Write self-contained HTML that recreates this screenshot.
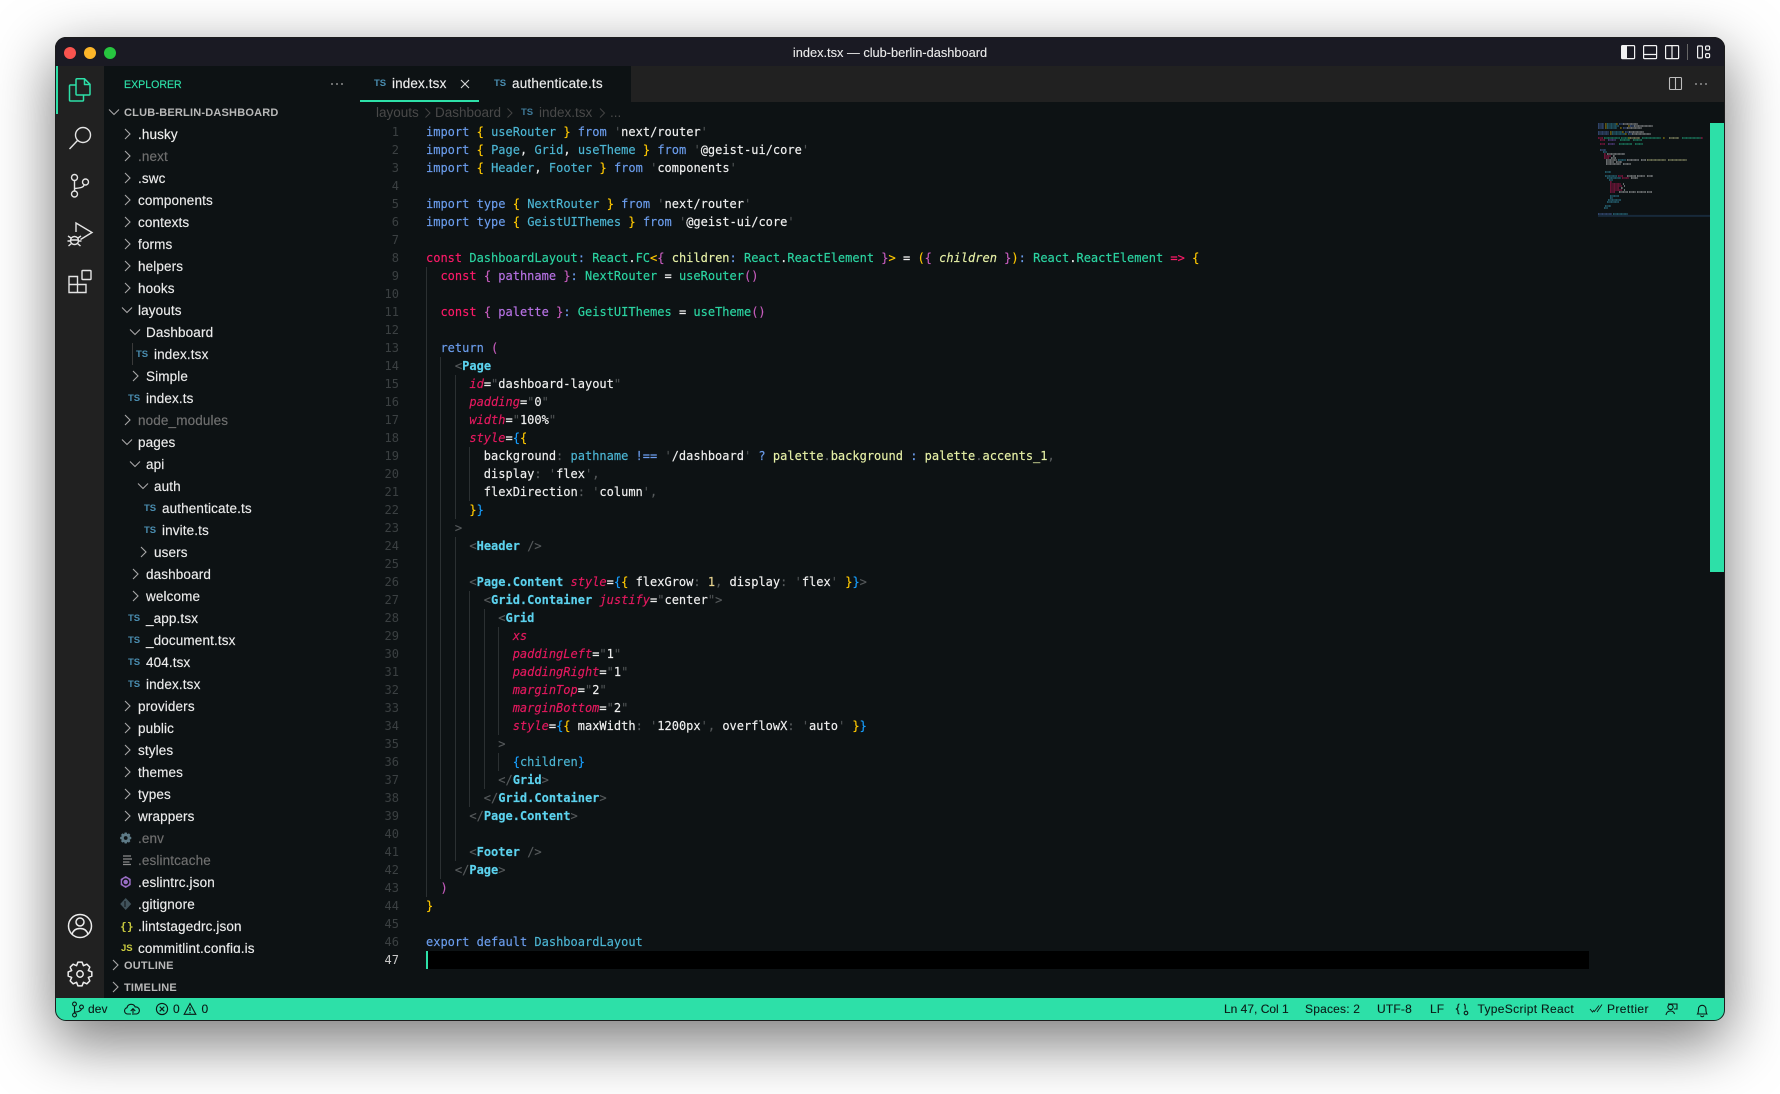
<!DOCTYPE html>
<html><head><meta charset="utf-8"><title>index.tsx — club-berlin-dashboard</title>
<style>
html,body{margin:0;padding:0;background:#fff;width:1780px;height:1094px;overflow:hidden}
.win{position:absolute;left:55px;top:37px;width:1670px;height:984px;border-radius:11px;overflow:hidden;box-shadow:0 20px 60px 2px rgba(0,0,0,.52)}
.in{position:absolute;left:-55px;top:-37px;width:1780px;height:1094px;background:#0d1214;font-family:"Liberation Sans",sans-serif}
.bd{position:absolute;left:0;top:0;right:0;bottom:0;border:1px solid #1c1c1c;border-radius:11px;pointer-events:none}
.a{position:absolute;white-space:pre}
.r{position:absolute;height:22px;line-height:22px;font-size:13.5px;letter-spacing:.13px;color:#ececec;white-space:pre;margin-top:1px;-webkit-text-stroke:.15px}
.dim{color:#707070}
.ts{position:absolute;font-size:9.5px;font-weight:bold;color:#4a8db0;line-height:22px;height:22px;white-space:pre;margin-top:1px}
.h{position:absolute;font-size:11px;font-weight:bold;letter-spacing:.2px;color:#b8b8b8;white-space:pre;line-height:16px;margin-top:1px}
.st{position:absolute;top:998px;height:22px;line-height:22px;font-size:12px;letter-spacing:.1px;color:#0b1a16;white-space:pre;-webkit-text-stroke:.1px}
.bc{position:absolute;top:104px;height:18px;line-height:18px;font-size:13.5px;color:#494949;white-space:pre}
pre{margin:0;font-family:"DejaVu Sans Mono","Liberation Mono",monospace;font-size:12px;line-height:18px}
#code{position:absolute;left:426px;top:123px;color:#f0f0f0;-webkit-text-stroke:.15px}
#nums{position:absolute;left:360px;top:123px;width:39px;text-align:right;color:#3b4042}
.gl{position:absolute;width:1px;background:#2b3032}
.k{color:#6b9ded}.c{color:#fb1a68}.i{color:#4cb6d4}.t{color:#2bd5a2}.s{color:#f2f2f2}.q{color:#4c5052}
.y{color:#ffc800}.p{color:#c65cbd}.b{color:#179fff}.v{color:#b772e4}.e{color:#e6f0a6}.ei{color:#e6f0a6;font-style:italic}
.g{color:#5cd2ee;font-weight:bold}.at{color:#e5195f;font-style:italic}.d{color:#565a5c}.n{color:#e9d591}
svg{position:absolute;left:0;top:0;overflow:visible}
</style></head><body>
<div class="win"><div class="in">

<!-- backgrounds -->
<div class="a" style="left:55px;top:37px;width:1670px;height:29px;background:#1a1a23"></div>
<div class="a" style="left:56px;top:66px;width:48px;height:932px;background:#212121"></div>
<div class="a" style="left:631px;top:66px;width:1094px;height:36px;background:#212121"></div>
<div class="a" style="left:426px;top:951px;width:1163px;height:18px;background:#000"></div>
<div class="a" style="left:1710px;top:123px;width:15px;height:449px;background:#2de0a8"></div>
<div class="a" style="left:55px;top:998px;width:1670px;height:23px;background:#2de0a8"></div>
<div class="a" style="left:56px;top:66px;width:2px;height:48px;background:#2de0a8"></div>
<div class="a" style="left:360px;top:100px;width:119px;height:2px;background:#2de0a8"></div>
<div class="a" style="left:426px;top:951px;width:2px;height:18px;background:#2de0a8"></div>

<!-- title -->
<div class="a" style="left:782px;top:43.500px;width:216px;text-align:center;line-height:17px;font-size:12.8px;color:#ececec;-webkit-text-stroke:.1px">index.tsx — club-berlin-dashboard</div>

<svg width="1780" height="1094" fill="none">
 <!-- traffic lights -->
 <circle cx="70" cy="53" r="6" fill="#f9544f"/><circle cx="90" cy="53" r="6" fill="#fdb629"/><circle cx="110" cy="53" r="6" fill="#27c53f"/>
 <!-- titlebar layout icons -->
 <g stroke="#f2f2f2" stroke-width="1.2">
  <rect x="1621.6" y="45.6" width="13" height="13" rx="1"/><rect x="1622" y="46" width="5" height="12" fill="#f2f2f2" stroke="none"/>
  <rect x="1643.6" y="45.6" width="13" height="13" rx="1"/><path d="M1644 54.5h12"/>
  <rect x="1665.6" y="45.6" width="13" height="13" rx="1"/><path d="M1672 46v12"/>
  <rect x="1697.6" y="46" width="4.8" height="12" rx="1"/><rect x="1705.6" y="46" width="4" height="4" rx="1.2"/><rect x="1705.6" y="53.6" width="4" height="4" rx="1.2"/>
 </g>
 <path d="M1687.5 44v16" stroke="#666" stroke-width="1"/>
 <!-- split editor + dots -->
 <g stroke="#bdbdbd" stroke-width="1.1"><rect x="1669.5" y="77.5" width="12" height="12" rx="1"/><path d="M1675.5 78v11"/></g>
 <g fill="#b0b0b0"><circle cx="1696" cy="84" r=".9"/><circle cx="1701" cy="84" r=".9"/><circle cx="1706" cy="84" r=".9"/>
 <circle cx="332" cy="84" r=".9"/><circle cx="337" cy="84" r=".9"/><circle cx="342" cy="84" r=".9"/></g>

 <!-- activity bar -->
 <g stroke="#2de0a8" stroke-width="1.5" stroke-linejoin="round">
  <path d="M77 78.8h7.5l5.5 5.5v9.7a1 1 0 0 1-1 1h-12a1 1 0 0 1-1-1v-14.200a1 1 0 0 1 1-1z"/><path d="M84.500 79v5.500h5.500"/>
  <path d="M76 85h-5.500a1 1 0 0 0-1 1v14a1 1 0 0 0 1 1h12a1 1 0 0 0 1-1v-5"/>
 </g>
 <g stroke="#e4e4e4" stroke-width="1.4">
  <circle cx="83" cy="135" r="7.500"/><path d="M77.500 140.500L69.500 149"/>
  <circle cx="74.500" cy="177.500" r="3"/><circle cx="74.500" cy="194" r="3"/><circle cx="85.500" cy="182" r="3"/>
  <path d="M74.500 180.500v10.500M75 188.500c5-.5 8.500-1 9-3.500"/>
  <path d="M76 232V223l16 9.500-11.500 7"/>
  <circle cx="74.500" cy="240.500" r="4" /><path d="M68 236l3 2M81 236l-3 2M67.500 241h3M78.500 241h3M68.500 246l3-2.500M80.500 246l-3-2.500M71 240h7"/>
  <path d="M69 276.500h8.500v8h8.500v8h-17zM69 284.500h8.500v8"/><rect x="82" y="270.500" width="9" height="9" rx=".8"/>
 </g>
 <g stroke="#ececec" stroke-width="1.5">
  <circle cx="80" cy="926" r="11.500"/><circle cx="80" cy="922" r="4"/><path d="M72 934.500c1-4 4-6 8-6s7 2 8 6"/>
  <g transform="translate(80 974)"><path stroke-linejoin="round" d="M-2.080-11.820L2.080-11.820 3.440-8.310 6.880-9.830 9.830-6.880 8.310-3.440 11.820-2.080 11.820 2.080 8.310 3.440 9.830 6.880 6.880 9.830 3.440 8.310 2.080 11.820-2.080 11.820-3.440 8.310-6.880 9.830-9.830 6.880-8.310 3.440-11.820 2.080-11.820-2.080-8.310-3.440-9.830-6.880-6.880-9.830-3.440-8.310Z"/><circle r="3.200"/></g>
 </g>

 <!-- sidebar chevrons -->
 <g stroke="#a8a8a8" stroke-width="1.1">
  <path d="M125 129l5 5-5 5M125 151l5 5-5 5M125 173l5 5-5 5M125 195l5 5-5 5M125 217l5 5-5 5M125 239l5 5-5 5M125 261l5 5-5 5M125 283l5 5-5 5M125 415l5 5-5 5M125 701l5 5-5 5M125 723l5 5-5 5M125 745l5 5-5 5M125 767l5 5-5 5M125 789l5 5-5 5M125 811l5 5-5 5"/>
  <path d="M133 371l5 5-5 5M133 569l5 5-5 5M133 591l5 5-5 5M141 547l5 5-5 5"/>
  <path d="M122 307.500l5 5 5-5M122 439.500l5 5 5-5M130 329.500l5 5 5-5M130 461.500l5 5 5-5M138 483.500l5 5 5-5"/>
  <path d="M109 109.500l5 5 5-5M113 960l5 5-5 5M113 982l5 5-5 5"/>
 </g>
 <path d="M132.500 343v22" stroke="#3a3a3a"/>
 <!-- tab close -->
 <path d="M461 80l8 8M469 80l-8 8" stroke="#d8d8d8" stroke-width="1.100"/>
 <!-- breadcrumb chevrons -->
 <g stroke="#444" stroke-width="1"><path d="M425.500 108.500l4.500 4.500-4.500 4.500M507.500 108.500l4.500 4.500-4.500 4.500M600 108.500l4.500 4.500-4.500 4.500"/></g>

 <!-- file icons -->
 <g transform="translate(125.700 838) scale(.47)"><path fill="#5d7a86" fill-rule="evenodd" d="M-2.080-11.820L2.080-11.820 3.440-8.310 6.880-9.830 9.830-6.880 8.310-3.440 11.820-2.080 11.820 2.080 8.310 3.440 9.830 6.880 6.880 9.830 3.440 8.310 2.080 11.820-2.080 11.820-3.440 8.310-6.880 9.830-9.830 6.880-8.310 3.440-11.820 2.080-11.820-2.080-8.310-3.440-9.830-6.880-6.880-9.830-3.440-8.310Z M4 0a4 4 0 1 0-8 0a4 4 0 1 0 8 0Z"/></g>
 <path d="M123 856.500h8M123 859.500h9M123 862.500h6.500M123 865h8" stroke="#8c8c8c" stroke-width="1.200" transform="translate(0 -.5)"/>
 <path d="M125.700 876l5 3v6l-5 3-5-3v-6z" fill="#9a6ec6"/><circle cx="125.700" cy="882" r="3" fill="none" stroke="#0d1214" stroke-width="1.500"/><circle cx="125.700" cy="882" r="1.500" fill="#9a6ec6"/>
 <path d="M125.700 898l5.500 6-5.500 6-5.500-6z" fill="#41535b"/><path d="M125 901v6" stroke="#0d1214"/>

 <!-- status icons -->
 <g stroke="#0b1a16" stroke-width="1.100">
  <circle cx="74.500" cy="1004" r="1.900"/><circle cx="74.500" cy="1015" r="1.900"/><circle cx="81.500" cy="1007" r="1.900"/><path d="M74.500 1006v7M75 1012c3 0 6-1 6.500-3"/>
  <path d="M130 1014h-3.500a3.200 3.200 0 0 1-.5-6.300 4.300 4.300 0 0 1 8.200-.7 3.400 3.400 0 0 1 1.300 7h-2.500M132 1015v-6M129.700 1011l2.300-2.300 2.300 2.300" transform="translate(1 0)"/>
  <circle cx="162" cy="1009" r="5.600"/><path d="M159.700 1006.700l4.600 4.600M164.300 1006.700l-4.600 4.600"/>
  <path d="M190 1003.500l5.800 10.800h-11.600zM190 1007v4M190 1012v1.200"/>
  <path d="M1459.500 1004c-1.500 0-1.500 1-1.500 2.500 0 1.500-.5 2-1.500 2.500 1 .5 1.500 1 1.500 2.500s0 2.500 1.500 2.500M1464 1004c1 .5 1.200 1 1.200 2.500v3"/><circle cx="1466" cy="1013" r="1.800"/>
  <path d="M1590 1009l2.500 3 1.500-2M1594 1012l5-6.500M1597 1012l5-7.500" stroke-width=".9"/>
  <g transform="translate(1 0)"><circle cx="1669.500" cy="1007" r="2.600"/><path d="M1665 1015c.5-3 2-4 4.500-4s3.500 1 4 3M1667 1004h9v5h-3"/></g>
  <path d="M1697.500 1014c1-1.500 1-3 1-5a3.700 3.700 0 0 1 7.400 0c0 2 0 3.500 1 5zM1700.500 1015.500a1.800 1.800 0 0 0 3.400 0"/>
 </g>

 <!-- minimap -->
 <path d="M1598 215.900h112" stroke="#17293a" stroke-width="2"/>
 <g stroke-width="1.400" opacity=".8" stroke-dasharray="1 .35">
  <path stroke="#47659f" d="M1598 124h6M1619 124h4M1598 126h6M1630 126h4M1598 128h6M1623 128h4M1598 132h11M1625 132h4M1598 134h11M1628 134h4M1600 150h6M1598 214h14"/>
  <path stroke="#2f8298" d="M1607 124h9M1607 126h12M1607 128h10M1612 132h10M1612 134h13M1603 152h4M1605 172h6M1605 176h12M1607 178h14M1609 180h4M1610 196h9M1610 198h3M1608 200h13M1607 202h12M1605 206h6M1604 208h4M1613 214h15M1618 160h8"/>
  <path stroke="#20a07a" d="M1604 138h16M1621 138h9M1642 138h19M1682 138h19M1620 140h10M1633 140h9M1619 144h13M1635 144h8"/>
  <path stroke="#a8174e" d="M1598 138h5M1701 138h2M1600 140h5M1600 144h5M1604 154h2M1604 156h7M1604 158h5M1618 176h5M1622 178h7M1610 182h2M1610 184h11M1610 186h12M1610 188h9M1610 190h12M1610 192h5"/>
  <path stroke="#6a4ca6" d="M1608 140h8M1608 144h7"/>
  <path stroke="#a6a8a9" d="M1623 124h15M1634 126h19M1627 128h15M1629 132h15M1632 134h19M1607 154h18M1613 156h2M1611 158h5M1606 160h11M1627 160h12M1606 162h8M1616 162h6M1606 164h15M1623 164h8M1627 176h9M1637 176h8M1647 176h6M1631 178h7M1623 184h1M1624 186h1M1621 188h2M1624 190h1M1619 192h9M1629 192h7M1637 192h9M1647 192h5M1641 160h5"/>
  <path stroke="#a5aa78" d="M1630 138h10M1669 138h10M1647 160h19M1668 160h19"/>
  <path stroke="#9a8410" d="M1605 124h2M1616 124h2M1605 126h2M1628 126h2M1605 128h2M1620 128h2M1610 132h2M1622 132h2M1610 134h2M1625 134h2M1628 138h2M1663 138h2"/>
 </g>
</svg>

<!-- explorer header -->
<div class="a" style="left:124px;top:76px;line-height:18px;font-size:10.6px;color:#2de0a8;-webkit-text-stroke:.15px">EXPLORER</div>
<div class="h" style="left:124px;top:104px">CLUB-BERLIN-DASHBOARD</div>
<div class="h" style="left:124px;top:957px">OUTLINE</div>
<div class="h" style="left:124px;top:979px">TIMELINE</div>

<!-- tree -->
<div class="r" style="left:138px;top:123px">.husky</div>
<div class="r dim" style="left:138px;top:145px">.next</div>
<div class="r" style="left:138px;top:167px">.swc</div>
<div class="r" style="left:138px;top:189px">components</div>
<div class="r" style="left:138px;top:211px">contexts</div>
<div class="r" style="left:138px;top:233px">forms</div>
<div class="r" style="left:138px;top:255px">helpers</div>
<div class="r" style="left:138px;top:277px">hooks</div>
<div class="r" style="left:138px;top:299px">layouts</div>
<div class="r" style="left:146px;top:321px">Dashboard</div>
<div class="ts" style="left:136px;top:343px">TS</div><div class="r" style="left:154px;top:343px">index.tsx</div>
<div class="r" style="left:146px;top:365px">Simple</div>
<div class="ts" style="left:128px;top:387px">TS</div><div class="r" style="left:146px;top:387px">index.ts</div>
<div class="r dim" style="left:138px;top:409px">node_modules</div>
<div class="r" style="left:138px;top:431px">pages</div>
<div class="r" style="left:146px;top:453px">api</div>
<div class="r" style="left:154px;top:475px">auth</div>
<div class="ts" style="left:144px;top:497px">TS</div><div class="r" style="left:162px;top:497px">authenticate.ts</div>
<div class="ts" style="left:144px;top:519px">TS</div><div class="r" style="left:162px;top:519px">invite.ts</div>
<div class="r" style="left:154px;top:541px">users</div>
<div class="r" style="left:146px;top:563px">dashboard</div>
<div class="r" style="left:146px;top:585px">welcome</div>
<div class="ts" style="left:128px;top:607px">TS</div><div class="r" style="left:146px;top:607px">_app.tsx</div>
<div class="ts" style="left:128px;top:629px">TS</div><div class="r" style="left:146px;top:629px">_document.tsx</div>
<div class="ts" style="left:128px;top:651px">TS</div><div class="r" style="left:146px;top:651px">404.tsx</div>
<div class="ts" style="left:128px;top:673px">TS</div><div class="r" style="left:146px;top:673px">index.tsx</div>
<div class="r" style="left:138px;top:695px">providers</div>
<div class="r" style="left:138px;top:717px">public</div>
<div class="r" style="left:138px;top:739px">styles</div>
<div class="r" style="left:138px;top:761px">themes</div>
<div class="r" style="left:138px;top:783px">types</div>
<div class="r" style="left:138px;top:805px">wrappers</div>
<div class="r dim" style="left:138px;top:827px">.env</div>
<div class="r dim" style="left:138px;top:849px">.eslintcache</div>
<div class="r" style="left:138px;top:871px">.eslintrc.json</div>
<div class="r" style="left:138px;top:893px">.gitignore</div>
<div class="a" style="left:120px;top:916px;line-height:22px;color:#c9cb3f;font-size:11px;font-weight:bold;font-family:'DejaVu Sans Mono',monospace">{</div><div class="a" style="left:127px;top:916px;line-height:22px;color:#c9cb3f;font-size:11px;font-weight:bold;font-family:'DejaVu Sans Mono',monospace">}</div><div class="r" style="left:138px;top:915px">.lintstagedrc.json</div>
<div class="a" style="left:100px;top:937px;width:260px;height:16px;overflow:hidden"><div class="ts" style="left:21px;top:0;color:#c9cb3f">JS</div><div class="r" style="left:38px;top:0">commitlint.config.js</div></div>

<!-- tabs -->
<div class="ts" style="left:374px;top:72px">TS</div><div class="r" style="left:392px;top:72px">index.tsx</div>
<div class="ts" style="left:494px;top:72px">TS</div><div class="r" style="left:512px;top:72px;letter-spacing:.2px">authenticate.ts</div>

<!-- breadcrumbs -->
<div class="bc" style="left:376px">layouts</div>
<div class="bc" style="left:435px">Dashboard</div>
<div class="ts" style="left:521px;top:101px;color:#3f7a99">TS</div>
<div class="bc" style="left:539px">index.tsx</div>
<div class="bc" style="left:610px">...</div>

<!-- guides -->
<div class="gl" style="left:426px;top:267px;height:630px"></div>
<div class="gl" style="left:440px;top:357px;height:522px"></div>
<div class="gl" style="left:455px;top:375px;height:144px"></div>
<div class="gl" style="left:455px;top:537px;height:324px"></div>
<div class="gl" style="left:469px;top:447px;height:54px"></div>
<div class="gl" style="left:469px;top:591px;height:216px"></div>
<div class="gl" style="left:484px;top:609px;height:180px"></div>
<div class="gl" style="left:498px;top:627px;height:108px"></div>
<div class="gl" style="left:498px;top:753px;height:18px"></div>

<!-- line numbers -->
<pre id="nums">1
2
3
4
5
6
7
8
9
10
11
12
13
14
15
16
17
18
19
20
21
22
23
24
25
26
27
28
29
30
31
32
33
34
35
36
37
38
39
40
41
42
43
44
45
46
<span style="color:#c8c8c8">47</span></pre>

<!-- code -->
<pre id="code"><span class="k">import</span> <span class="y">{</span> <span class="i">useRouter</span> <span class="y">}</span> <span class="k">from</span> <span class="q">'</span>next/router<span class="q">'</span>
<span class="k">import</span> <span class="y">{</span> <span class="i">Page</span><span class="s">,</span> <span class="i">Grid</span><span class="s">,</span> <span class="i">useTheme</span> <span class="y">}</span> <span class="k">from</span> <span class="q">'</span>@geist-ui/core<span class="q">'</span>
<span class="k">import</span> <span class="y">{</span> <span class="i">Header</span><span class="s">,</span> <span class="i">Footer</span> <span class="y">}</span> <span class="k">from</span> <span class="q">'</span>components<span class="q">'</span>

<span class="k">import</span> <span class="k">type</span> <span class="y">{</span> <span class="i">NextRouter</span> <span class="y">}</span> <span class="k">from</span> <span class="q">'</span>next/router<span class="q">'</span>
<span class="k">import</span> <span class="k">type</span> <span class="y">{</span> <span class="i">GeistUIThemes</span> <span class="y">}</span> <span class="k">from</span> <span class="q">'</span>@geist-ui/core<span class="q">'</span>

<span class="c">const</span> <span class="t">DashboardLayout</span><span class="k">:</span> <span class="t">React</span>.<span class="t">FC</span><span class="y">&lt;</span><span class="p">{</span> <span class="e">children</span><span class="k">:</span> <span class="t">React</span>.<span class="t">ReactElement</span> <span class="p">}</span><span class="y">&gt;</span> = <span class="y">(</span><span class="p">{</span> <span class="ei">children</span> <span class="p">}</span><span class="y">)</span><span class="k">:</span> <span class="t">React</span>.<span class="t">ReactElement</span> <span class="c">=&gt;</span> <span class="y">{</span>
  <span class="c">const</span> <span class="p">{</span> <span class="v">pathname</span> <span class="p">}</span><span class="k">:</span> <span class="t">NextRouter</span> = <span class="t">useRouter</span><span class="p">()</span>

  <span class="c">const</span> <span class="p">{</span> <span class="v">palette</span> <span class="p">}</span><span class="k">:</span> <span class="t">GeistUIThemes</span> = <span class="t">useTheme</span><span class="p">()</span>

  <span class="k">return</span> <span class="p">(</span>
    <span class="d">&lt;</span><span class="g">Page</span>
      <span class="at">id</span>=<span class="q">"</span>dashboard-layout<span class="q">"</span>
      <span class="at">padding</span>=<span class="q">"</span>0<span class="q">"</span>
      <span class="at">width</span>=<span class="q">"</span>100%<span class="q">"</span>
      <span class="at">style</span>=<span class="b">{</span><span class="y">{</span>
        background<span class="d">:</span> <span class="i">pathname</span> <span class="k">!==</span> <span class="q">'</span>/dashboard<span class="q">'</span> <span class="k">?</span> <span class="e">palette</span><span class="d">.</span><span class="e">background</span> <span class="k">:</span> <span class="e">palette</span><span class="d">.</span><span class="e">accents_1</span><span class="d">,</span>
        display<span class="d">:</span> <span class="q">'</span>flex<span class="q">'</span><span class="d">,</span>
        flexDirection<span class="d">:</span> <span class="q">'</span>column<span class="q">'</span><span class="d">,</span>
      <span class="y">}</span><span class="b">}</span>
    <span class="d">&gt;</span>
      <span class="d">&lt;</span><span class="g">Header</span> <span class="d">/&gt;</span>

      <span class="d">&lt;</span><span class="g">Page.Content</span> <span class="at">style</span>=<span class="b">{</span><span class="y">{</span> flexGrow<span class="d">:</span> <span class="n">1</span><span class="d">,</span> display<span class="d">:</span> <span class="q">'</span>flex<span class="q">'</span> <span class="y">}</span><span class="b">}</span><span class="d">&gt;</span>
        <span class="d">&lt;</span><span class="g">Grid.Container</span> <span class="at">justify</span>=<span class="q">"</span>center<span class="q">"</span><span class="d">&gt;</span>
          <span class="d">&lt;</span><span class="g">Grid</span>
            <span class="at">xs</span>
            <span class="at">paddingLeft</span>=<span class="q">"</span>1<span class="q">"</span>
            <span class="at">paddingRight</span>=<span class="q">"</span>1<span class="q">"</span>
            <span class="at">marginTop</span>=<span class="q">"</span>2<span class="q">"</span>
            <span class="at">marginBottom</span>=<span class="q">"</span>2<span class="q">"</span>
            <span class="at">style</span>=<span class="b">{</span><span class="y">{</span> maxWidth<span class="d">:</span> <span class="q">'</span>1200px<span class="q">'</span><span class="d">,</span> overflowX<span class="d">:</span> <span class="q">'</span>auto<span class="q">'</span> <span class="y">}</span><span class="b">}</span>
          <span class="d">&gt;</span>
            <span class="b">{</span><span class="i">children</span><span class="b">}</span>
          <span class="d">&lt;/</span><span class="g">Grid</span><span class="d">&gt;</span>
        <span class="d">&lt;/</span><span class="g">Grid.Container</span><span class="d">&gt;</span>
      <span class="d">&lt;/</span><span class="g">Page.Content</span><span class="d">&gt;</span>

      <span class="d">&lt;</span><span class="g">Footer</span> <span class="d">/&gt;</span>
    <span class="d">&lt;/</span><span class="g">Page</span><span class="d">&gt;</span>
  <span class="p">)</span>
<span class="y">}</span>

<span class="k">export</span> <span class="k">default</span> <span class="i">DashboardLayout</span>
</pre>

<!-- status bar text -->
<div class="st" style="left:88px">dev</div>
<div class="st" style="left:173px">0</div>
<div class="st" style="left:201.500px">0</div>
<div class="st" style="left:1224px;letter-spacing:0">Ln 47, Col 1</div>
<div class="st" style="left:1305px;letter-spacing:.2px">Spaces: 2</div>
<div class="st" style="left:1377px;letter-spacing:.2px">UTF-8</div>
<div class="st" style="left:1430px">LF</div>
<div class="st" style="left:1477.500px;letter-spacing:.32px">TypeScript React</div>
<div class="st" style="left:1607px;letter-spacing:.4px">Prettier</div>

</div><div class="bd"></div></div>
</body></html>
